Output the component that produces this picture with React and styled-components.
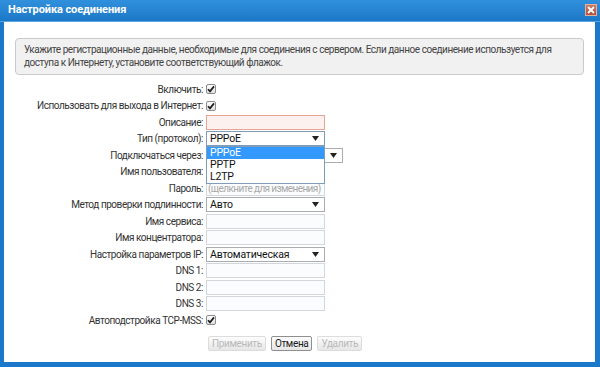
import React from "react";
import styled, { createGlobalStyle } from "styled-components";

const font = `Roboto, "Liberation Sans", Arial, sans-serif`;

const GlobalStyle = createGlobalStyle`
  html, body {
    margin: 0;
    padding: 0;
    background: #ffffff;
  }
  body {
    font-family: ${font};
    font-size: 10px;
    letter-spacing: -0.45px;
    color: #333333;
  }
`;

const fields = [
  { label: "Включить:", kind: "check" },
  { label: "Использовать для выхода в Интернет:", kind: "check" },
  { label: "Описание:", kind: "input", error: true },
  { label: "Тип (протокол):", kind: "select", value: "PPPoE", open: true },
  { label: "Подключаться через:", kind: "select", value: "", wide: true },
  { label: "Имя пользователя:", kind: "input" },
  { label: "Пароль:", kind: "input", placeholder: "(щелкните для изменения)" },
  { label: "Метод проверки подлинности:", kind: "select", value: "Авто" },
  { label: "Имя сервиса:", kind: "input" },
  { label: "Имя концентратора:", kind: "input" },
  { label: "Настройка параметров IP:", kind: "select", value: "Автоматическая" },
  { label: "DNS 1:", kind: "input" },
  { label: "DNS 2:", kind: "input" },
  { label: "DNS 3:", kind: "input" },
  { label: "Автоподстройка TCP-MSS:", kind: "check" },
];

const protocols = ["PPPoE", "PPTP", "L2TP"];

const Arrow = () => (
  <svg width="7" height="5" viewBox="0 0 7 5">
    <path d="M0 0 H7 L3.5 5 Z" fill="#222" />
  </svg>
);

const Check = () => (
  <svg width="8" height="8" viewBox="0 0 8 8">
    <path d="M1 4.2 L3 6.4 L7 1.4" stroke="#1e1e1e" strokeWidth="1.7" fill="none" />
  </svg>
);

function Control({ field }) {
  if (field.kind === "check") {
    return (
      <CheckBox>
        <Check />
      </CheckBox>
    );
  }
  if (field.kind === "select") {
    return (
      <SelectBox $wide={field.wide} $open={field.open}>
        <span>{field.value}</span>
        <Arrow />
        {field.open && (
          <DropList>
            {protocols.map((p, i) => (
              <DropItem key={p} $active={i === 0}>
                {p}
              </DropItem>
            ))}
          </DropList>
        )}
      </SelectBox>
    );
  }
  return (
    <TextBox $error={field.error}>
      {field.placeholder && <Placeholder>{field.placeholder}</Placeholder>}
    </TextBox>
  );
}

export default function App() {
  return (
    <>
      <GlobalStyle />
      <Window>
        <TitleBar>
          <Title>Настройка соединения</Title>
          <CloseButton>
            <svg width="8" height="8" viewBox="0 0 8 8">
              <path d="M1 1 L7 7 M7 1 L1 7" stroke="#fff" strokeWidth="1.8" />
            </svg>
          </CloseButton>
        </TitleBar>
        <Body>
          <InfoBox>
            Укажите регистрационные данные, необходимые для соединения с сервером. Если данное
            соединение используется для доступа к Интернету, установите соответствующий флажок.
          </InfoBox>
          <Form>
            {fields.map((f) => (
              <React.Fragment key={f.label}>
                <Label>{f.label}</Label>
                <Cell>
                  <Control field={f} />
                </Cell>
              </React.Fragment>
            ))}
          </Form>
          <Buttons>
            <Button disabled>Применить</Button>
            <Button>Отмена</Button>
            <Button disabled>Удалить</Button>
          </Buttons>
        </Body>
      </Window>
    </>
  );
}

const Window = styled.div`
  width: 600px;
  height: 367px;
  box-sizing: border-box;
  display: flex;
  flex-direction: column;
  background: #1c79c9;
  padding: 0 5px 5px 4px;
`;

const TitleBar = styled.div`
  height: 22px;
  flex: none;
  display: flex;
  align-items: center;
  justify-content: space-between;
  margin: 0 -5px 0 -4px;
  padding: 0 3px 2px 8px;
  box-sizing: border-box;
  background: linear-gradient(#3190dc, #1b78c8);
  border-bottom: 1px solid #5aa6e2;
`;

const Title = styled.span`
  color: #ffffff;
  font-weight: bold;
  font-size: 11px;
  letter-spacing: -0.1px;
`;

const CloseButton = styled.div`
  width: 12px;
  height: 12px;
  box-sizing: border-box;
  display: flex;
  align-items: center;
  justify-content: center;
  background: linear-gradient(#cf7760, #b2503a);
  border: 1px solid #e6b0a0;
  margin-top: 1px;
`;

const Body = styled.div`
  flex: 1;
  background: #ffffff;
  display: flex;
  flex-direction: column;
`;

const InfoBox = styled.div`
  margin: 16px 11px 0 11px;
  padding: 4px 8px 5px 8px;
  background: #f1f1f1;
  border: 1px solid #cacaca;
  border-radius: 4px;
  line-height: 13px;
  color: #444444;
  font-size: 10px;
`;

const Form = styled.div`
  margin-top: 6px;
  display: grid;
  grid-template-columns: 199px 1fr;
  grid-auto-rows: 16.5px;
  column-gap: 3px;
`;

const Label = styled.div`
  white-space: nowrap;
  display: flex;
  align-items: center;
  justify-content: flex-end;
  color: #333333;
`;

const Cell = styled.div`
  display: flex;
  align-items: center;
`;

const CheckBox = styled.div`
  width: 10px;
  height: 10px;
  box-sizing: border-box;
  border: 1px solid #8d8d8d;
  border-radius: 2px;
  background: linear-gradient(#fdfdfd, #e2e2e2);
  display: flex;
  align-items: center;
  justify-content: center;
`;

const TextBox = styled.div`
  width: 119px;
  height: 15px;
  box-sizing: border-box;
  border: 1px solid ${(p) => (p.$error ? "#e6a595" : "#d3d7db")};
  background: ${(p) => (p.$error ? "#fdf1ef" : "#fbfcfd")};
  display: flex;
  align-items: center;
  padding-left: 1px;
  overflow: hidden;
`;

const Placeholder = styled.span`
  color: #a8a8a8;
  white-space: nowrap;
  letter-spacing: -0.6px;
`;

const SelectBox = styled.div`
  position: relative;
  width: ${(p) => (p.$wide ? "137px" : "119px")};
  height: 15px;
  box-sizing: border-box;
  border: 1px solid ${(p) => (p.$open ? "#7f9db9" : "#a7adb3")};
  background: #ffffff;
  display: flex;
  align-items: center;
  justify-content: space-between;
  padding: 0 5px 0 3px;
  color: #111111;
  font-size: 10.5px;
  letter-spacing: -0.2px;
`;

const DropList = styled.div`
  position: absolute;
  top: 14px;
  left: -1px;
  width: 119px;
  box-sizing: border-box;
  border: 1px solid #7f9db9;
  background: #ffffff;
  z-index: 2;
`;

const DropItem = styled.div`
  height: 12px;
  line-height: 12px;
  padding-left: 3px;
  font-size: 10.5px;
  color: ${(p) => (p.$active ? "#ffffff" : "#111111")};
  background: ${(p) => (p.$active ? "#3399ff" : "transparent")};
`;

const Buttons = styled.div`
  display: flex;
  gap: 5px;
  padding-left: 204px;
  margin-top: 7px;
`;

const Button = styled.button`
  height: 15px;
  padding: 0 3px;
  font-family: ${font};
  font-size: 10px;
  letter-spacing: -0.35px;
  line-height: 13px;
  border: 1px solid ${(p) => (p.disabled ? "#dcdcdc" : "#8f8f8f")};
  border-radius: 2px;
  background: linear-gradient(#fdfdfd, #e6e6e6);
  color: ${(p) => (p.disabled ? "#b9b9b9" : "#1a1a1a")};
`;
